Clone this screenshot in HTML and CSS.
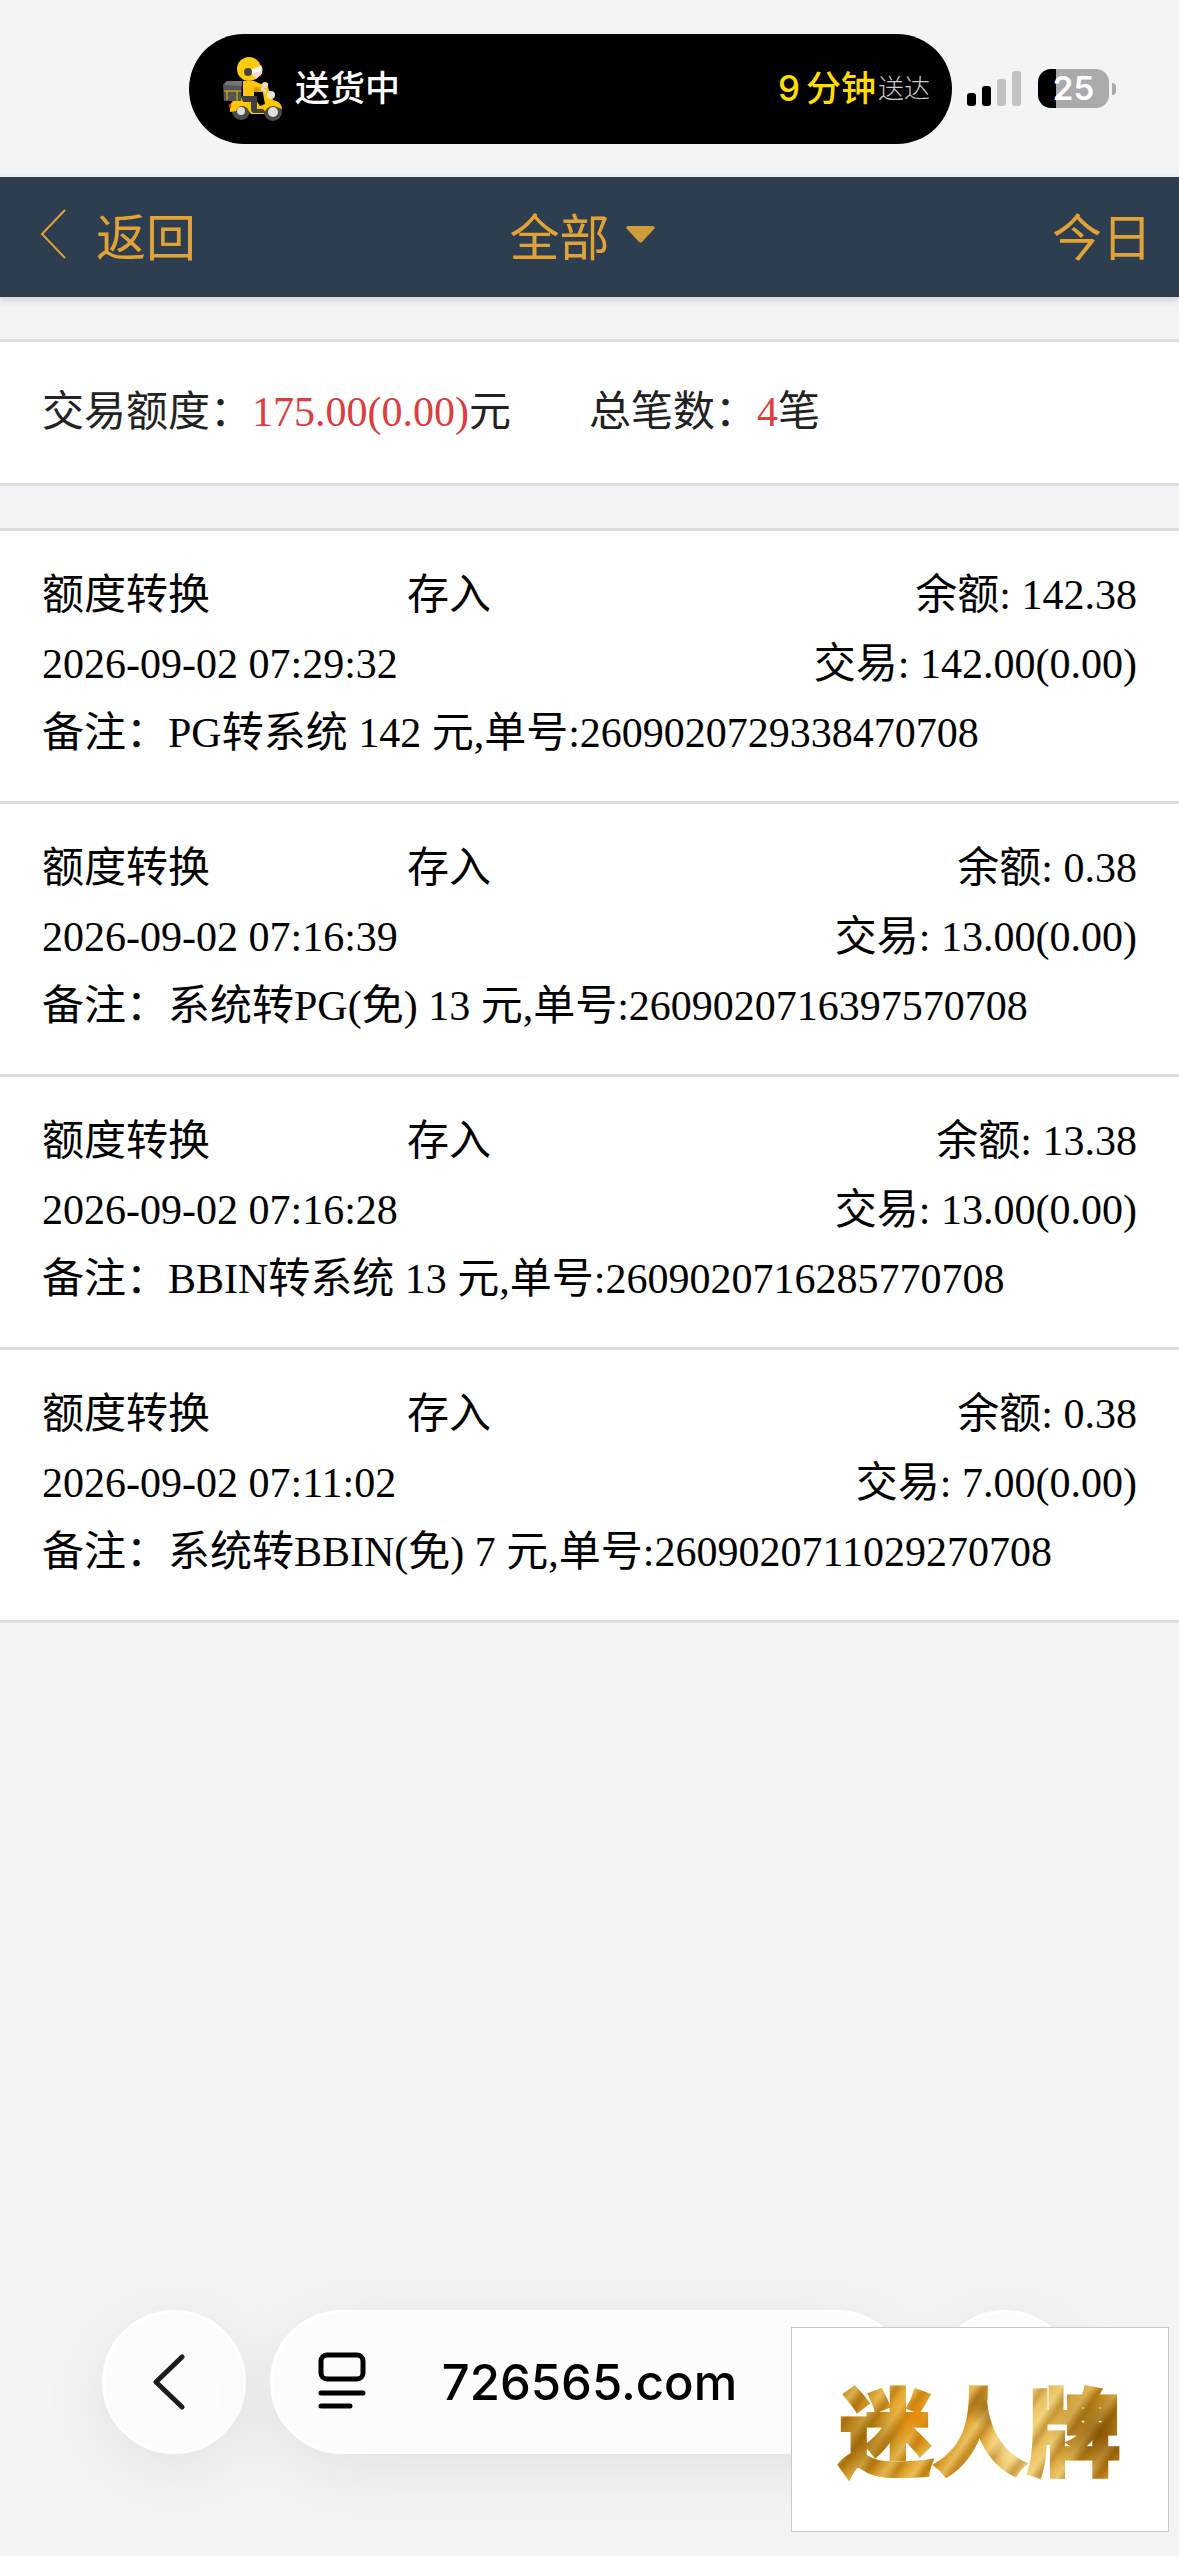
FILE: index.html
```html
<!DOCTYPE html>
<html lang="zh-CN">
<head>
<meta charset="utf-8">
<meta name="viewport" content="width=device-width, initial-scale=1">
<title>交易记录</title>
<link rel="stylesheet" href="styles.css">
</head>
<body>
<div class="status">
  <div class="island">
    <svg class="rider" viewBox="0 0 60 64" aria-hidden="true">
      <circle cx="18" cy="54" r="9" fill="#4a4a4a"/><circle cx="18" cy="54" r="4" fill="#ddd"/>
      <circle cx="50" cy="55" r="9" fill="#4a4a4a"/><circle cx="50" cy="55" r="5" fill="#ddd"/>
      <path d="M7 50q1-9 14-9l12 2 4 6 5-2-3-16 5-3 6 15q9 2 9 9l-8-3q-8 0-10 8H28l-4-6q-7-5-11 3l-6 1z" fill="#fcc800"/>
      <path d="M18 39h16v13h6l3 4H31q-3 0-3-4v-7h-8z" fill="#3f3f42"/>
      <path d="M20 24h11l7 3 7-1v4l-6 5h-8v4H20z" fill="#fdc60a"/>
      <path d="M31 30l10 1 2 3-12 1z" fill="#d99c00"/>
      <path d="M0 28l4-4h15l-1 20H1z" fill="#555"/><path d="M0 28l4-4h15v5z" fill="#77736f"/>
      <path d="M1 34h17M4 34v9M14 34v10" stroke="#e5c800" fill="none"/>
      <circle cx="26" cy="12" r="12" fill="#fccb0b"/>
      <path d="M27 13l11-5q3 5 0 10l-5 4-4-5z" fill="#f8dcc8"/>
      <path d="M26 13l12-3v4l-11 3z" fill="#fff"/><circle cx="25" cy="15" r="4" fill="#444"/>
      <circle cx="42" cy="28" r="3" fill="#f4d8c0"/><circle cx="48" cy="38" r="4" fill="#e8e3d4"/>
      <path d="M38 31l5 4" stroke="#ddd" stroke-width="3"/><path d="M7 47v4" stroke="#e02020" stroke-width="2"/>
    </svg>
    <span class="island-state">送货中</span>
    <span class="island-eta">9<span>分钟</span></span>
    <span class="island-note">送达</span>
  </div>
  <svg class="signal" viewBox="0 0 55 36" role="img" aria-label="信号">
    <rect x="0" y="22" width="9" height="13" rx="3"/><rect x="15" y="15" width="9" height="20" rx="3"/>
    <rect x="30" y="8" width="9" height="27" rx="3" fill="#c2c2c3"/><rect x="45" y="0" width="9" height="35" rx="3" fill="#c2c2c3"/>
  </svg>
  <div class="battery"><span class="battery-body">25</span><span class="battery-tip"></span></div>
</div>

<header class="topbar">
  <a class="topbar-back" href="#">
    <svg class="chevron" viewBox="0 0 26 50" aria-hidden="true"><path d="M25 1L2 25l23 24" fill="none" stroke="#e2a336" stroke-width="2"/></svg>
    返回</a>
  <button class="topbar-filter" type="button">全部
    <svg class="caret" viewBox="0 0 29 17" aria-hidden="true"><path d="M2 0h25q3 1 1 3L16 16q-1 1-3 0L1 3Q-1 1 2 0z" fill="#cf9c3b"/></svg>
  </button>
  <button class="topbar-date" type="button">今日</button>
</header>

<main class="content">
  <section class="summary">
    <p>交易额度：<span class="amount">175.00(0.00)</span>元</p>
    <p>总笔数：<span class="amount">4</span>笔</p>
  </section>

  <ul class="records">
    <li class="record">
      <div class="record-head"><span>额度转换</span><span>存入</span><span class="right">余额: 142.38</span></div>
      <div class="record-line"><time>2026-09-02 07:29:32</time><span>交易: 142.00(0.00)</span></div>
      <p>备注：PG转系统 142 元,单号:2609020729338470708</p>
    </li>
    <li class="record">
      <div class="record-head"><span>额度转换</span><span>存入</span><span class="right">余额: 0.38</span></div>
      <div class="record-line"><time>2026-09-02 07:16:39</time><span>交易: 13.00(0.00)</span></div>
      <p>备注：系统转PG(免) 13 元,单号:2609020716397570708</p>
    </li>
    <li class="record">
      <div class="record-head"><span>额度转换</span><span>存入</span><span class="right">余额: 13.38</span></div>
      <div class="record-line"><time>2026-09-02 07:16:28</time><span>交易: 13.00(0.00)</span></div>
      <p>备注：BBIN转系统 13 元,单号:2609020716285770708</p>
    </li>
    <li class="record">
      <div class="record-head"><span>额度转换</span><span>存入</span><span class="right">余额: 0.38</span></div>
      <div class="record-line"><time>2026-09-02 07:11:02</time><span>交易: 7.00(0.00)</span></div>
      <p>备注：系统转BBIN(免) 7 元,单号:2609020711029270708</p>
    </li>
  </ul>
</main>

<nav class="browser">
  <button class="glass round" type="button" aria-label="后退">
    <svg class="back-icon" viewBox="0 0 32 56" aria-hidden="true"><path d="M29 3L3 28l26 25" fill="none" stroke="#1b1c1e" stroke-width="5" stroke-linecap="round" stroke-linejoin="round"/></svg>
  </button>
  <button class="glass address" type="button">
    <svg class="page-icon" viewBox="0 0 46 54" aria-hidden="true"><g fill="none" stroke="#000" stroke-linecap="round"><rect x="2" y="0" width="42" height="24" rx="6" stroke-width="5"/><path d="M2 38h42M2 51h29" stroke-width="5"/></g></svg>
    <span>726565.com</span>
  </button>
  <button class="glass round" type="button" aria-label="更多"></button>
</nav>

<div class="brand"><span>迷人牌</span></div>
</body>
</html>
```
FILE: styles.css
```css
* { box-sizing: border-box; }

body {
  margin: 0;
  min-height: 100vh;
  position: relative;
  display: flex;
  flex-direction: column;
  background: #f2f4f5;
  color: #000;
  font: 42px/69px "Liberation Serif", "Noto Sans CJK SC", serif;
}

p, ul { margin: 0; padding: 0; }
ul { list-style: none; }
button { border: 0; padding: 0; background: none; font: inherit; color: inherit; }
a { color: inherit; text-decoration: none; }
svg { display: block; flex: none; }

/* Status bar */
.status {
  display: flex;
  align-items: center;
  height: 177px;
  padding: 0 63px 0 189px;
  font-family: Inter, "Noto Sans CJK SC", sans-serif;
}
.island {
  flex: 1;
  display: flex;
  align-items: center;
  height: 110px;
  margin-right: 15px;
  padding: 0 22px 0 34px;
  border-radius: 55px;
  background: #000;
  color: #fff;
  font-size: 35px;
  font-weight: 500;
}
.rider { width: 60px; height: 64px; margin-right: 12px; }
.island-state { flex: 1; }
.island-eta { display: flex; gap: 6px; color: #fd0; margin-right: 2px; }
.island-note { color: #ccc; font-size: 26px; font-weight: 300; }
.signal { width: 55px; height: 36px; margin-right: 16px; }
.battery { display: flex; align-items: center; gap: 3px; }
.battery-body {
  width: 71px;
  border-radius: 13px;
  background: linear-gradient(90deg, #000 25%, #a9abab 25%);
  color: #fff;
  font-size: 33px;
  font-weight: 600;
  line-height: 39px;
  text-align: center;
}
.battery-tip { width: 4px; height: 12px; border-radius: 0 6px 6px 0; background: #a9abab; }

/* Page header */
.topbar {
  display: grid;
  grid-template-columns: 1fr auto 1fr;
  align-items: center;
  height: 120px;
  padding: 0 27px 6px 40px;
  background: #2d3e50;
  box-shadow: 0 3px 8px rgba(0, 0, 0, .16);
  color: #e2a336;
  font-family: "Noto Sans CJK SC", sans-serif;
  font-size: 50px;
}
.topbar-back { display: flex; align-items: center; gap: 30px; }
.chevron { width: 26px; height: 50px; }
.topbar-filter { display: flex; align-items: center; gap: 16px; padding-right: 28px; }
.caret { width: 29px; height: 17px; }
.topbar-date { justify-self: end; }

/* Totals */
.summary {
  display: flex;
  gap: 78px;
  margin: 42px 0;
  padding: 36px 42px;
  border: solid #dcdedf;
  border-width: 3px 0;
  background: #fff;
  color: #222;
}
.amount { color: #dc3d3e; }

/* Transactions */
.records { border-top: 3px solid #dcdedf; }
.record {
  padding: 30px 42px 33px;
  border-bottom: 3px solid #dcdedf;
  background: #fff;
}
.record-head { display: grid; grid-template-columns: 1fr 1fr 1fr; }
.record-line { display: flex; justify-content: space-between; }
.right { text-align: right; }

/* Browser controls */
.browser {
  display: flex;
  gap: 24px;
  margin-top: auto;
  padding: 0 102px 102px;
  font-family: Inter, sans-serif;
}
.glass {
  display: flex;
  align-items: center;
  height: 144px;
  border: 3px solid #fff;
  border-radius: 72px;
  background: #fbfcfe;
  box-shadow: 0 16px 70px rgba(0, 0, 0, .08);
}
.round { flex: none; width: 144px; justify-content: center; }
.back-icon { width: 32px; height: 56px; margin-right: 10px; }
.address { flex: 1; padding: 0 46px; font-size: 49px; font-weight: 500; }
.page-icon { width: 46px; height: 54px; overflow: visible; }
.address span { flex: 1; padding-right: 46px; text-align: center; }

/* Brand badge floating over the controls */
.brand {
  position: absolute;
  right: 10px;
  bottom: 24px;
  display: flex;
  align-items: center;
  justify-content: center;
  width: 378px;
  height: 205px;
  padding-bottom: 6px;
  border: 1px solid #c8caca;
  background: #fff;
  font: oblique 8deg 900 94px/140px "Noto Sans CJK SC", sans-serif;
}
.brand span {
  padding: 0 10px;
  background:
    radial-gradient(circle at 30% 45%, rgba(225, 130, 0, .8), transparent 14%),
    radial-gradient(circle at 52% 35%, rgba(120, 70, 0, .6), transparent 12%),
    radial-gradient(circle at 90% 55%, rgba(110, 65, 0, .7), transparent 18%),
    radial-gradient(circle at 60% 62%, rgba(255, 240, 180, .8), transparent 12%),
    radial-gradient(circle at 12% 60%, rgba(140, 90, 0, .6), transparent 16%),
    repeating-linear-gradient(125deg, rgba(140, 80, 0, .3) 0 2px, rgba(240, 170, 40, .1) 7px, rgba(255, 236, 160, .4) 16px, rgba(140, 80, 0, .3) 24px),
    linear-gradient(100deg, #b27a12, #e2a62c 25%, #d6941c 40%, #eccb70 65%, #d69a24 85%, #b47510);
  background-clip: text;
  -webkit-background-clip: text;
  color: transparent;
  -webkit-text-stroke: 3px transparent;
}
```
